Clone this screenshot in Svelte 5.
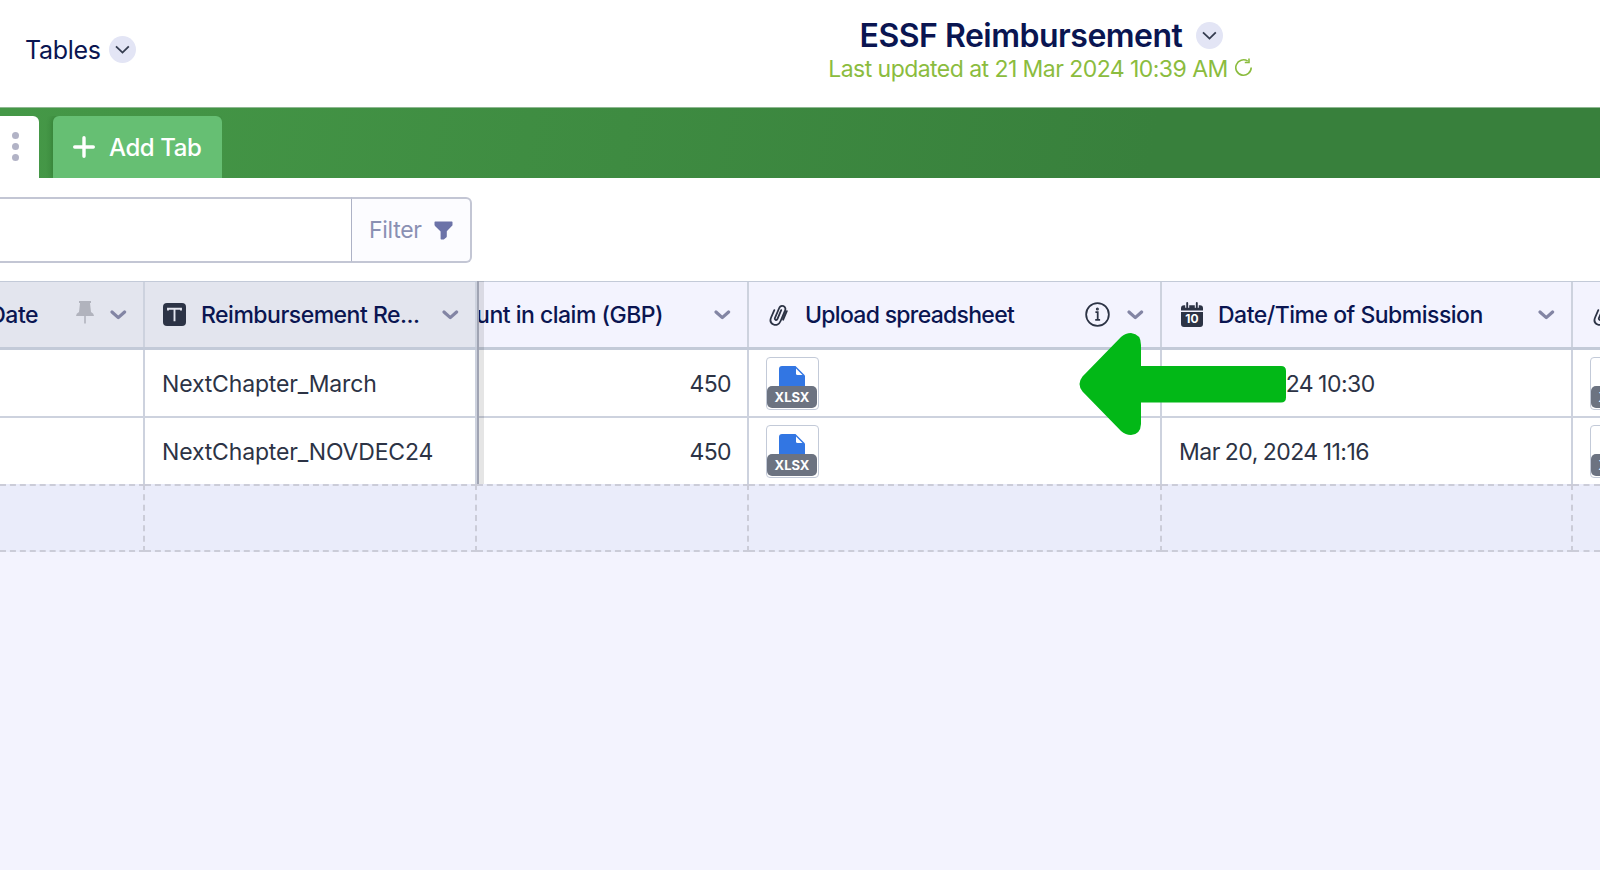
<script>
  const columns = [
    { key: 'date', label: 'Date' },
    { key: 'ref', label: 'Reimbursement Re...' },
    { key: 'amount', label: 'Amount in claim (GBP)' },
    { key: 'upload', label: 'Upload spreadsheet' },
    { key: 'time', label: 'Date/Time of Submission' },
    { key: 'extra', label: '' }
  ];
  const rows = [
    { ref: 'NextChapter_March', amount: '450', time: 'Mar 21, 2024 10:30' },
    { ref: 'NextChapter_NOVDEC24', amount: '450', time: 'Mar 20, 2024 11:16' }
  ];
</script>

{#snippet chevron()}
  <svg class="chev" width="17" height="10" viewBox="0 0 17 10"><path d="M2 2l6.300 5.600L14.600 2" /></svg>
{/snippet}

{#snippet round()}
  <span class="round"><svg width="27" height="27" viewBox="0 0 27 27"><path d="M7 10.400l6.500 6.200 6.300-6.200" /></svg></span>
{/snippet}

{#snippet clip()}
  <svg class="clip" width="19" height="24" viewBox="0 0 19 24"><path d="M12.200 7.200l-3.700 8.600c-.4 1-1.100 1.400-1.900 1.100s-1-1.100-.6-2l4-9.400c.9-2.200 2.700-3 4.500-2.300s2.300 2.500 1.500 4.500l-4.400 10.300c-1.500 3.500-4.300 4.700-7.100 3.500s-3.700-3.900-2.400-7l3.200-7.400M17.800 8.200l-3.600 8.500" /></svg>
{/snippet}

{#snippet file()}
  <span class="thumb">
    <svg width="26" height="22" viewBox="0 0 26 22"><path d="M3 0h13.500L26 9.500V22H0V3a3 3 0 0 1 3-3z" fill="#3276e3" /><path d="M17 2.500l6.500 6.500H18.500a1.500 1.500 0 0 1-1.500-1.500z" fill="#fff" /></svg>
    <b>XLSX</b>
  </span>
{/snippet}

<div class="page">
  <header>
    <div class="crumb"><span class="t tables">Tables</span>{@render round()}</div>
    <div class="title">
      <div class="name"><h1 class="t">ESSF Reimbursement</h1>{@render round()}</div>
      <div class="updated">
        <span class="t">Last updated at 21 Mar 2024 10:39 AM</span>
        <svg width="18" height="19" viewBox="0 0 18 19"><path d="M12.700 3.100A7.700 7.700 0 1 0 16.200 9.500" /><path d="M14 .5v4h-4.200" /></svg>
      </div>
    </div>
  </header>
  <nav>
    <div class="tab"><i></i><i></i><i></i></div>
    <button class="add"><svg width="22" height="22" viewBox="0 0 22 22"><path d="M11 1.700v18.600M1.700 11h18.600" /></svg><span class="t">Add Tab</span></button>
  </nav>
  <div class="toolbar">
    <div class="search"></div>
    <button class="filter"><span class="t">Filter</span><svg width="19" height="19" viewBox="0 0 19 19"><path d="M1.200.5h16.600q.7 0 .7.700v2.700q0 .5-.4.900l-5.300 5.500v5.200q0 .4-.3.700l-2.400 2q-.4.300-.9.300H7.300q-.7 0-.7-.700v-7.300L1 4.900q-.5-.5-.5-1.100V1.200q0-.7.700-.7z" /></svg></button>
  </div>
  <div class="grid">
    <div class="row head">
      {#each columns as c}
        <div class="cell {c.key}">
          {#if c.key === 'ref'}
            <svg class="type" width="23" height="23" viewBox="0 0 23 23"><rect width="23" height="23" rx="4" fill="#2c3345" /><path d="M5 7.500V5.700h13v1.800M11.500 5.700v12.500" fill="none" stroke="#e3e5ee" stroke-width="1.900" /></svg>
          {:else if c.key === 'upload' || c.key === 'extra'}
            {@render clip()}
          {:else if c.key === 'time'}
            <span class="cal"><svg width="22" height="25" viewBox="0 0 22 25"><path d="M3 3.200h16a3 3 0 0 1 3 3V8.500H0V6.200a3 3 0 0 1 3-3zM0 10h22V22a3 3 0 0 1-3 3H3a3 3 0 0 1-3-3z" fill="#2c3345" /><path d="M6.200 2v3.800M15.800 2v3.800" stroke="#f3f3fe" stroke-width="4" /><path d="M6.200 1v4.500M15.800 1v4.500" stroke="#2c3345" stroke-width="1.900" stroke-linecap="round" /></svg><b>10</b></span>
          {/if}
          {#if c.label}<span class="t label">{c.label}</span>{/if}
          {#if c.key === 'date'}
            <svg class="pin" width="18" height="23" viewBox="0 0 18 23"><path d="M3 0h12v2h-1l1 9q3 1.500 3 4H0q0-2.500 3-4L4 2H3zM8.200 15h1.600v7.500H8.200z" /></svg>
          {:else if c.key === 'upload'}
            <svg class="info" width="25" height="25" viewBox="0 0 24 24"><circle cx="12" cy="12" r="10.900" /><path d="M10 9.800h2.200V17M9.800 17.200h4.700" /><circle cx="11.900" cy="6.700" r=".6" /></svg>
          {/if}
          {#if c.key !== 'extra'}{@render chevron()}{/if}
        </div>
      {/each}
    </div>
    {#each rows as r}
      <div class="row body">
        <div class="cell date"></div>
        <div class="cell ref"><span class="t">{r.ref}</span></div>
        <div class="cell amount"><span class="t">{r.amount}</span></div>
        <div class="cell">{@render file()}</div>
        <div class="cell time"><span class="t">{r.time}</span></div>
        <div class="cell">{@render file()}</div>
      </div>
    {/each}
    <div class="row empty">{#each columns as c}<div class="cell"></div>{/each}</div>
    <div class="freeze"></div>
    <svg class="arrow" width="208" height="103" viewBox="0 0 208 103"><path d="M3.500 43.500L42 4Q46.500 0 52 0Q62 1 62 12V33H202Q207 33 207 38V64.500Q207 69.500 202 69.500H62V91Q61.500 101.500 52 102Q46.500 102 42 98L3.500 58.500Q-2.500 51 3.500 43.500z" fill="#02b817" /></svg>
  </div>
</div>

<style>
  :global(body) { margin: 0; }
  .page { width: 1600px; height: 870px; overflow: hidden; background: #f3f3fe; font-family: Inter, sans-serif; color: #2c3345; }
  svg { display: block; flex: none; }
  .t { white-space: pre; flex: none; }
  header { height: 108px; background: #fff; border-bottom: 1px solid #8fb892; box-sizing: border-box; display: grid; grid-template-columns: 480px 1120px; color: #0a1551; }
  .crumb { display: flex; align-items: center; gap: 8px; padding: 0 0 9px 25px; font-size: 25px; letter-spacing: -.3px; }
  .tables { padding-top: 2px; }
  .title { display: flex; flex-direction: column; align-items: center; padding: 15px 0 0 1px; }
  .name { display: flex; align-items: center; gap: 14px; height: 41px; padding-left: 2px; }
  h1 { margin: 0; font-size: 32px; font-weight: 600; line-height: 42px; letter-spacing: -.5px; }
  .updated { display: flex; gap: 7px; height: 24px; line-height: 26px; font-size: 23px; color: #8bbc3e; letter-spacing: -.55px; }
  .updated svg { margin-top: 2px; }
  .updated path { fill: none; stroke: #8bbc3e; stroke-width: 1.600; }
  .round { width: 27px; height: 27px; border-radius: 50%; background: #e3e5f5; flex: none; }
  .round path { fill: none; stroke: #343c4f; stroke-width: 1.800; }
  nav { height: 70px; box-sizing: border-box; padding-top: 8px; display: flex; gap: 14px; background: linear-gradient(100deg, #459847, #38803c 72%); }
  .tab { width: 39px; box-sizing: border-box; background: #fff; border-top-right-radius: 6px; display: flex; flex-direction: column; gap: 4px; align-items: center; padding: 16px 9px 0 0; }
  .tab i { width: 7px; height: 7px; border-radius: 50%; background: #b2b3c6; }
  button { border: 0; font-family: inherit; display: flex; align-items: center; }
  .add { width: 169px; background: #66bf73; border-radius: 6px 6px 0 0; box-shadow: -2px 0 5px rgba(0,60,0,.2); clip-path: inset(0 0 0 -10px); color: #fff; font-size: 24px; font-weight: 500; padding: 0 0 0 20px; gap: 14px; letter-spacing: -.4px; }
  .add path { stroke: #fff; stroke-width: 3.400; stroke-linecap: round; }
  .toolbar { height: 103px; box-sizing: border-box; background: #fff; display: flex; padding-top: 19px; }
  .search { width: 351px; height: 66px; box-sizing: border-box; border: solid #c3c6d4; border-width: 2px 0; }
  .filter { width: 121px; height: 66px; border: 2px solid #c3c6d4; border-left-width: 1px; border-left-color: #adb2c6; border-radius: 0 6px 6px 0; background: #fcfcff; color: #8a90b3; font-size: 23px; letter-spacing: -.3px; padding: 0 0 0 17px; gap: 12px; }
  .filter path { fill: #6c73a8; }
  .grid { position: relative; }
  .row { display: grid; grid-template-columns: 145px 332px 272px 413px 411px 27px; }
  .cell { box-sizing: border-box; border-right: 2px solid #cdd2de; display: flex; align-items: center; overflow: hidden; min-width: 0; }
  .cell:last-child { border-right: 0; }
  .head { height: 69px; border-top: 1px solid #c3cad8; border-bottom: 3px solid #c3cad8; box-sizing: border-box; font-size: 23px; font-weight: 550; color: #0a1551; }
  .head .date, .head .ref { background: #e3e5ee; }
  .chev { margin-left: auto; }
  .chev path { fill: none; stroke: #8385a4; stroke-width: 3.200; stroke-linecap: round; stroke-linejoin: round; }
  .head .cell { padding-right: 16px; letter-spacing: -.5px; }
  .head .upload { letter-spacing: -.7px; }
  .head .label { padding-top: 1px; }
  .head .date, .head .amount { justify-content: flex-end; }
  .head .amount .chev { margin-left: 51px; }
  .body { height: 68px; background: #fff; border-bottom: 2px solid #cdd2de; box-sizing: border-box; font-size: 23px; }
  .body + .empty { margin-top: -2px; }
  .body .cell { padding: 0 17px; letter-spacing: -.17px; }
  .body .t { padding-top: 2px; }
  .body .amount { justify-content: flex-end; letter-spacing: -.6px; padding-right: 16px; }
  .body .time { letter-spacing: -.52px; word-spacing: -1px; }
  .type { margin: 0 15px 0 18px; }
  .clip { margin: 0 17px 0 20px; }
  .clip path { fill: none; stroke: #2c3345; stroke-width: 1.800; stroke-linecap: round; }
  .cal { margin: 0 15px 0 19px; position: relative; }
  .cal b { position: absolute; left: 0; right: 0; top: 10px; text-align: center; font: 700 12px/14px Inter, sans-serif; letter-spacing: 0; color: #fff; }
  .pin { fill: #b1b3bd; margin: 0 0 4px 38px; }
  .info { margin-left: auto; }
  .info path, .info circle { fill: none; stroke: #2c3345; stroke-width: 1.700; }
  .pin + .chev, .info + .chev { margin-left: 16px; }
  .info + .chev { margin-left: 17px; }
  .thumb { width: 53px; height: 53px; box-sizing: border-box; border: 1px solid #c3cad8; border-radius: 4px; flex: none; display: flex; flex-direction: column; align-items: center; padding: 8px 1px 0 0; background: #fff; }
  .thumb b { width: 50px; height: 22px; margin-top: -2px; border-radius: 5px; background: #6c7381; color: #fff; font: 700 13px/22px Inter, sans-serif; text-align: center; letter-spacing: 0; z-index: 1; }
  .empty { height: 68px; box-sizing: border-box; background: #eaecfa; position: relative; }
  .empty .cell { border: dashed #cbccd8; border-width: 2px 2px 2px 0; }
  .empty .cell:last-child { border-right: 0; }
  .freeze { position: absolute; left: 477px; top: 0; width: 7px; height: 203px; box-sizing: border-box; border-left: 2px solid #a0a4b3; background: rgba(0,0,0,.1); }
  .arrow { position: absolute; left: 1078.500px; top: 52px; }
</style>
